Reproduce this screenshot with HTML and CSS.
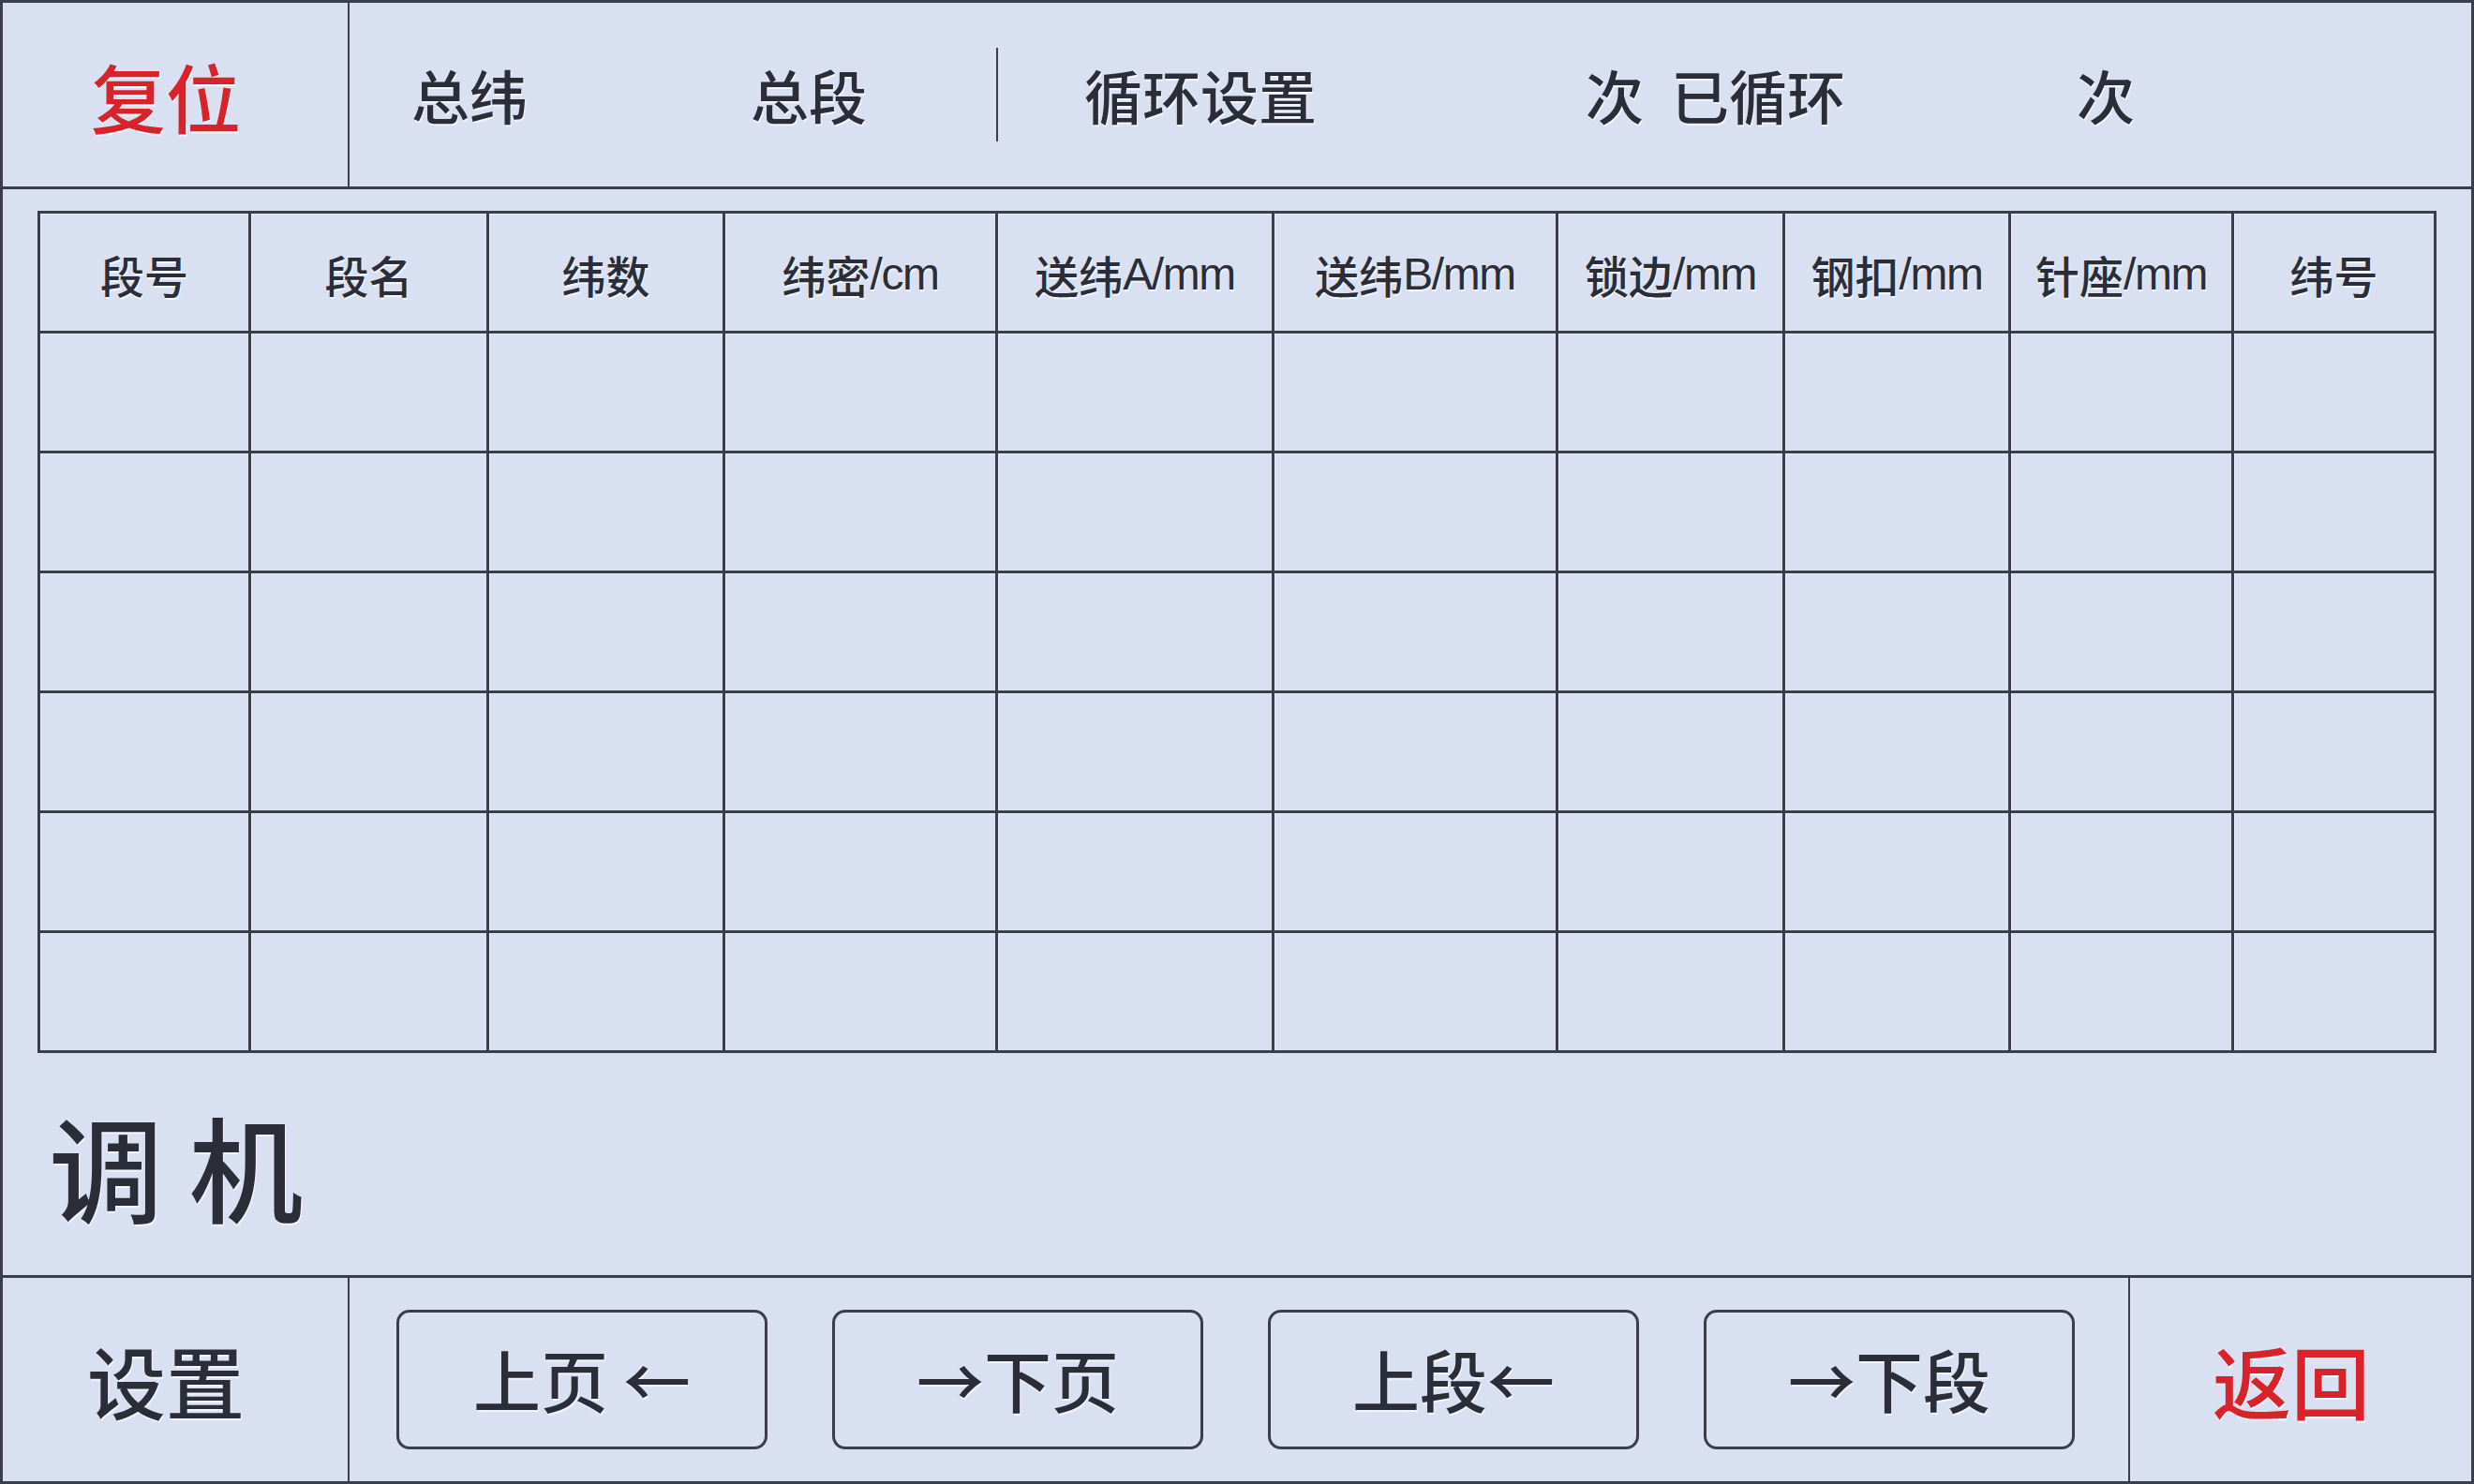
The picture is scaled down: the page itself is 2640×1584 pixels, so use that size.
FILE: index.html
```html
<!DOCTYPE html>
<html lang="zh-CN">
<head>
<meta charset="utf-8">
<title>调机</title>
<link rel="stylesheet" href="styles.css">
</head>
<body>
<div class="screen">
  <div class="topbar">
    <div class="cell-left"><span class="red big">复位</span></div>
    <div class="info">
      <span class="lbl l1">总纬</span>
      <span class="lbl l2">总段</span>
      <span class="vdiv"></span>
      <span class="lbl l3">循环设置</span>
      <span class="lbl l4">次</span>
      <span class="lbl l5">已循环</span>
      <span class="lbl l6">次</span>
    </div>
  </div>
  <div class="middle">
    <div class="grid">
      <div class="th">段号</div>
      <div class="th">段名</div>
      <div class="th">纬数</div>
      <div class="th">纬密<span class="lat">/cm</span></div>
      <div class="th">送纬<span class="lat">A/mm</span></div>
      <div class="th">送纬<span class="lat">B/mm</span></div>
      <div class="th">锁边<span class="lat">/mm</span></div>
      <div class="th">钢扣<span class="lat">/mm</span></div>
      <div class="th">针座<span class="lat">/mm</span></div>
      <div class="th">纬号</div>
      <div class="td"></div><div class="td"></div><div class="td"></div><div class="td"></div><div class="td"></div><div class="td"></div><div class="td"></div><div class="td"></div><div class="td"></div><div class="td"></div>
      <div class="td"></div><div class="td"></div><div class="td"></div><div class="td"></div><div class="td"></div><div class="td"></div><div class="td"></div><div class="td"></div><div class="td"></div><div class="td"></div>
      <div class="td"></div><div class="td"></div><div class="td"></div><div class="td"></div><div class="td"></div><div class="td"></div><div class="td"></div><div class="td"></div><div class="td"></div><div class="td"></div>
      <div class="td"></div><div class="td"></div><div class="td"></div><div class="td"></div><div class="td"></div><div class="td"></div><div class="td"></div><div class="td"></div><div class="td"></div><div class="td"></div>
      <div class="td"></div><div class="td"></div><div class="td"></div><div class="td"></div><div class="td"></div><div class="td"></div><div class="td"></div><div class="td"></div><div class="td"></div><div class="td"></div>
      <div class="td"></div><div class="td"></div><div class="td"></div><div class="td"></div><div class="td"></div><div class="td"></div><div class="td"></div><div class="td"></div><div class="td"></div><div class="td"></div>
    </div>
    <div class="mode">调 机</div>
  </div>
  <div class="bottombar">
    <div class="cell-left"><span class="big">设置</span></div>
    <div class="nav">
      <div class="btn">上页 ←</div>
      <div class="btn">→下页</div>
      <div class="btn">上段←</div>
      <div class="btn">→下段</div>
    </div>
    <div class="cell-right"><span class="red big">返回</span></div>
  </div>
</div>
</body>
</html>
```

FILE: styles.css
```css
html, body {
  margin: 0;
  padding: 0;
}
body {
  width: 2640px;
  height: 1584px;
  overflow: hidden;
  background: #d9e0f1;
  font-family: "Noto Sans CJK SC", "Noto Sans", sans-serif;
  color: #2b2d38;
}
.screen {
  width: 2640px;
  height: 1584px;
  box-sizing: border-box;
  border: 3px solid #3a3d4a;
  background: #d9e0f1;
  display: flex;
  flex-direction: column;
}
.topbar {
  height: 196px;
  flex: none;
  display: flex;
  border-bottom: 3px solid #3a3d4a;
}
.cell-left {
  flex: none;
  width: 370px;
  border-right: 2px solid #3a3d4a;
  display: flex;
  align-items: center;
  justify-content: center;
  padding-right: 20px;
  box-sizing: border-box;
}
.big {
  font-size: 84px;
  font-weight: 500;
  line-height: 1;
  text-shadow: 1px 2px 1px rgba(255,255,255,0.7);
}
.topbar .big {
  font-size: 80px;
}
.red {
  color: #d8232a;
}
.info {
  flex: 1;
  display: flex;
  align-items: center;
  padding-left: 66px;
}
.lbl {
  font-size: 62px;
  font-weight: 500;
  line-height: 1;
  text-shadow: 1px 2px 1px rgba(255,255,255,0.7);
}
.l2 { margin-left: 238px; }
.l3 { margin-left: 92px; }
.l4 { margin-left: 287px; }
.l5 { margin-left: 29px; }
.l6 { margin-left: 247px; }
.vdiv {
  width: 2px;
  height: 100px;
  background: #3a3d4a;
  margin-left: 138px;
}
.middle {
  flex: 1;
  display: flex;
  flex-direction: column;
  padding: 23px 37px 0 37px;
}
.grid {
  display: grid;
  grid-template-columns: 222px 251px 249px 288px 292px 300px 239px 238px 235px 213px;
  grid-template-rows: repeat(7, 125px);
  gap: 3px;
  padding: 3px;
  background: #3a3d4a;
  width: 2560px;
  box-sizing: border-box;
}
.th, .td {
  background: #d9e0f1;
  box-shadow: inset 1px 1px 0 rgba(255,255,255,0.45);
}
.th {
  display: flex;
  align-items: center;
  justify-content: center;
  font-size: 47px;
  font-weight: 500;
  padding-top: 4px;
  box-sizing: border-box;
  text-shadow: 1px 2px 1px rgba(255,255,255,0.7);
}
.lat {
  font-family: "Liberation Sans Narrow", "Liberation Sans", sans-serif;
  font-size: 48px;
  letter-spacing: -1.5px;
}
.mode {
  flex: 1;
  display: flex;
  align-items: center;
  padding-left: 12px;
  font-size: 122px;
  font-weight: 500;
  line-height: 1;
  text-shadow: 1px 2px 1px rgba(255,255,255,0.7);
}
.bottombar {
  height: 217px;
  flex: none;
  display: flex;
  border-top: 3px solid #3a3d4a;
}
.nav {
  flex: 1;
  display: flex;
  align-items: center;
  gap: 69px;
  padding-left: 50px;
}
.btn {
  width: 396px;
  height: 149px;
  box-sizing: border-box;
  border: 3px solid #3a3d4a;
  border-radius: 14px;
  display: flex;
  align-items: center;
  justify-content: center;
  padding-bottom: 4px;
  font-size: 72px;
  font-weight: 500;
  line-height: 1;
  text-shadow: 1px 2px 1px rgba(255,255,255,0.7);
}
.cell-right {
  width: 366px;
  flex: none;
  border-left: 2px solid #3a3d4a;
  display: flex;
  align-items: center;
  justify-content: center;
  padding-right: 20px;
  box-sizing: border-box;
}
```
